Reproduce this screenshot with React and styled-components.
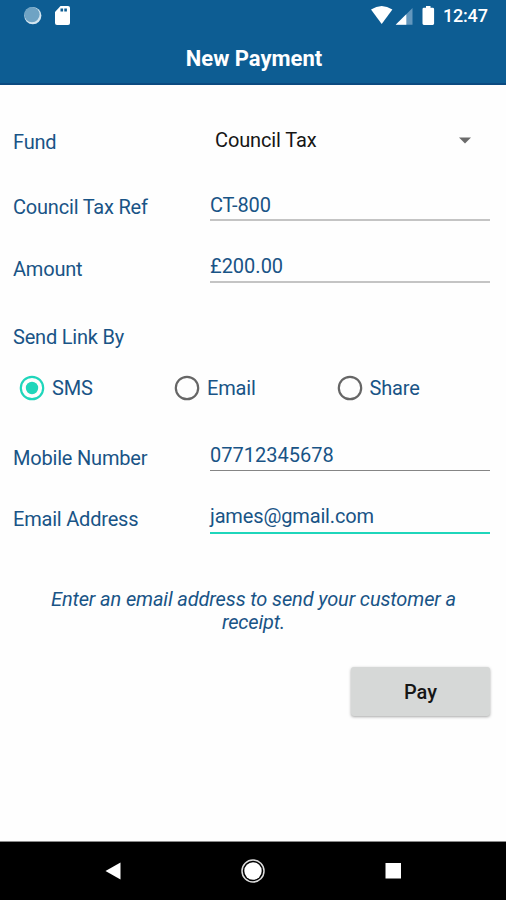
import { useState } from "react";
import styled, { createGlobalStyle } from "styled-components";

const _blue = "#0d5d93";
const _text = "#195486";
const _accent = "#1fd6bb";

const GlobalStyle = createGlobalStyle`
  * {
    box-sizing: border-box;
  }
  body {
    margin: 0;
    background: #fefefe;
    font-family: Roboto, "Liberation Sans", sans-serif;
  }
`;

const Screen = styled.div`
  width: 506px;
  height: 900px;
  display: flex;
  flex-direction: column;
  overflow: hidden;
  font-size: 20px;
  line-height: 24px;
  color: ${_text};
`;

const Header = styled.header`
  height: 85px;
  flex: none;
  background: ${_blue};
  border-bottom: 2px solid #0b4a80;
  color: #fff;
`;

const StatusBar = styled.div`
  height: 32px;
  padding: 0 18px 0 23px;
  display: flex;
  align-items: center;
  justify-content: space-between;
`;

const StatusIcons = styled.div`
  display: flex;
  align-items: center;
  svg {
    display: block;
  }
`;

const Clock = styled.span`
  width: 45px;
  margin-left: 6px;
  font-size: 18px;
  font-weight: 500;
  letter-spacing: -0.2px;
  white-space: nowrap;
`;

const Title = styled.h1`
  margin: 15px 0 0;
  padding-left: 2px;
  font-size: 22px;
  line-height: 24px;
  font-weight: 700;
  text-align: center;
`;

const Form = styled.main`
  flex: 1;
  padding: 0 16px 0 13px;
  display: flex;
  flex-direction: column;
`;

const Row = styled.div`
  display: grid;
  grid-template-columns: 197px 1fr;
  align-items: start;
  height: 29px;
  margin-top: ${(p) => p.$top}px;
`;

const Label = styled.label`
  padding-top: ${(p) => p.$drop ?? 3}px;
  letter-spacing: -0.2px;
  white-space: nowrap;
`;

const Input = styled.div`
  height: ${(p) => p.$height ?? 29}px;
  border-bottom: ${(p) => p.$line};
  letter-spacing: ${(p) => p.$spacing ?? 0}px;
`;

const Select = styled.div`
  display: flex;
  justify-content: space-between;
  align-items: center;
  padding: 0 19px 0 5px;
  color: #161616;
  letter-spacing: -0.12px;
`;

const SectionLabel = styled.div`
  margin-top: 42px;
  letter-spacing: -0.2px;
`;

const RadioGroup = styled.div`
  display: grid;
  grid-template-columns: 155px 162.5px 1fr;
  height: 26px;
  margin-top: 26px;
  padding-left: 6px;
  letter-spacing: -0.15px;
`;

const Radio = styled.div`
  display: flex;
  align-items: center;
  gap: 7px;
  cursor: pointer;
  svg {
    display: block;
    flex: none;
  }
`;

const Hint = styled.p`
  margin: 55px 0 0;
  padding-left: 4px;
  font-style: italic;
  line-height: 23px;
  letter-spacing: -0.13px;
  text-align: center;
`;

const PayButton = styled.button`
  align-self: flex-end;
  width: 139px;
  height: 49px;
  margin: 33px 0 0;
  padding: 0;
  border: 0;
  border-radius: 3px;
  background: #d6d8d7;
  box-shadow: 0 1px 3px rgba(0, 0, 0, 0.35);
  color: #161616;
  font: 500 20px/24px Roboto, "Liberation Sans", sans-serif;
`;

const NavBar = styled.nav`
  height: 59px;
  flex: none;
  display: flex;
  align-items: center;
  justify-content: center;
  gap: 116px;
  background: #000;
  border-top: 1px solid #8a8a8a;
  svg {
    display: block;
  }
`;

const RadioIcon = ({ checked }) => (
  <svg width="26" height="26" viewBox="0 0 26 26">
    <circle
      cx="13"
      cy="13"
      r="11.2"
      fill="none"
      stroke={checked ? _accent : "#666"}
      strokeWidth="2.2"
    />
    {checked && <circle cx="13" cy="13" r="6.2" fill={_accent} />}
  </svg>
);

const options = ["SMS", "Email", "Share"];

const App = () => {
  const [sendBy, setSendBy] = useState("SMS");

  return (
    <>
      <GlobalStyle />
      <Screen>
        <Header>
          <StatusBar>
            <StatusIcons>
              <svg width="50" height="20" viewBox="0 0 50 20">
                <circle cx="9.8" cy="9.6" r="8.6" fill="#d3e5f0" />
                <circle cx="8.9" cy="8.6" r="7.7" fill="#6fa3c4" />
                <path
                  d="M37.5 0H45a2 2 0 0 1 2 2v15a2 2 0 0 1-2 2H34a2 2 0 0 1-2-2V6z"
                  fill="#fff"
                />
                <path d="M37.5 2.5h2.6v3h-2.600zM41.300 2.500h2.600v3h-2.600z" fill={_blue} />
              </svg>
            </StatusIcons>
            <StatusIcons>
              <svg width="66" height="20" viewBox="0 0 66 20">
                <path d="M0 3.6Q10.7-3.4 21.4 3.6L10.7 18z" fill="#fff" />
                <path d="M24.7 18.8L41.500 2v16.800z" fill="#6397bd" />
                <path d="M24.7 18.8L35.300 8.200v10.600z" fill="#fff" />
                <path
                  d="M55 0h4.500v1.800h2.200q1.400 0 1.400 1.400v14.300q0 1.400-1.400 1.400h-8.800q-1.400 0-1.400-1.400V3.200q0-1.400 1.400-1.400h2.100z"
                  fill="#fff"
                />
              </svg>
              <Clock>12:47</Clock>
            </StatusIcons>
          </StatusBar>
          <Title>New Payment</Title>
        </Header>

        <Form>
          <Row $top={43}>
            <Label $drop={2}>Fund</Label>
            <Select>
              Council Tax
              <svg width="12" height="7" viewBox="0 0 12 7">
                <path d="M0 .5h12L6 6.5z" fill="#6b6b6b" />
              </svg>
            </Select>
          </Row>
          <Row $top={36}>
            <Label $drop={2}>Council Tax Ref</Label>
            <Input $line="2px solid #c4c4c4" $height={28} $spacing={-0.15}>
              CT-800
            </Input>
          </Row>
          <Row $top={32}>
            <Label>Amount</Label>
            <Input $line="2px solid #c4c4c4">£200.00</Input>
          </Row>

          <SectionLabel>Send Link By</SectionLabel>
          <RadioGroup>
            {options.map((option) => (
              <Radio key={option} onClick={() => setSendBy(option)}>
                <RadioIcon checked={sendBy === option} />
                {option}
              </Radio>
            ))}
          </RadioGroup>

          <Row $top={42}>
            <Label>Mobile Number</Label>
            <Input $line="1px solid #858585" $height={28}>
              07712345678
            </Input>
          </Row>
          <Row $top={32}>
            <Label>Email Address</Label>
            <Input $line={`2px solid ${_accent}`} $height={30} $spacing={-0.15}>
              james@gmail.com
            </Input>
          </Row>

          <Hint>
            Enter an email address to send your customer a<br />
            receipt.
          </Hint>
          <PayButton>Pay</PayButton>
        </Form>

        <NavBar>
          <svg width="24" height="24" viewBox="0 0 24 24">
            <path d="M4.500 12L19.500 3.500V20.500z" fill="#fff" />
          </svg>
          <svg width="24" height="24" viewBox="0 0 24 24">
            <circle cx="12" cy="12" r="11" fill="none" stroke="#ddd" strokeWidth="1.5" />
            <circle cx="12" cy="12" r="8.7" fill="#fff" />
          </svg>
          <svg width="24" height="24" viewBox="0 0 24 24">
            <rect x="4.500" y="4" width="15.500" height="15.500" fill="#fff" />
          </svg>
        </NavBar>
      </Screen>
    </>
  );
};

export default App;
